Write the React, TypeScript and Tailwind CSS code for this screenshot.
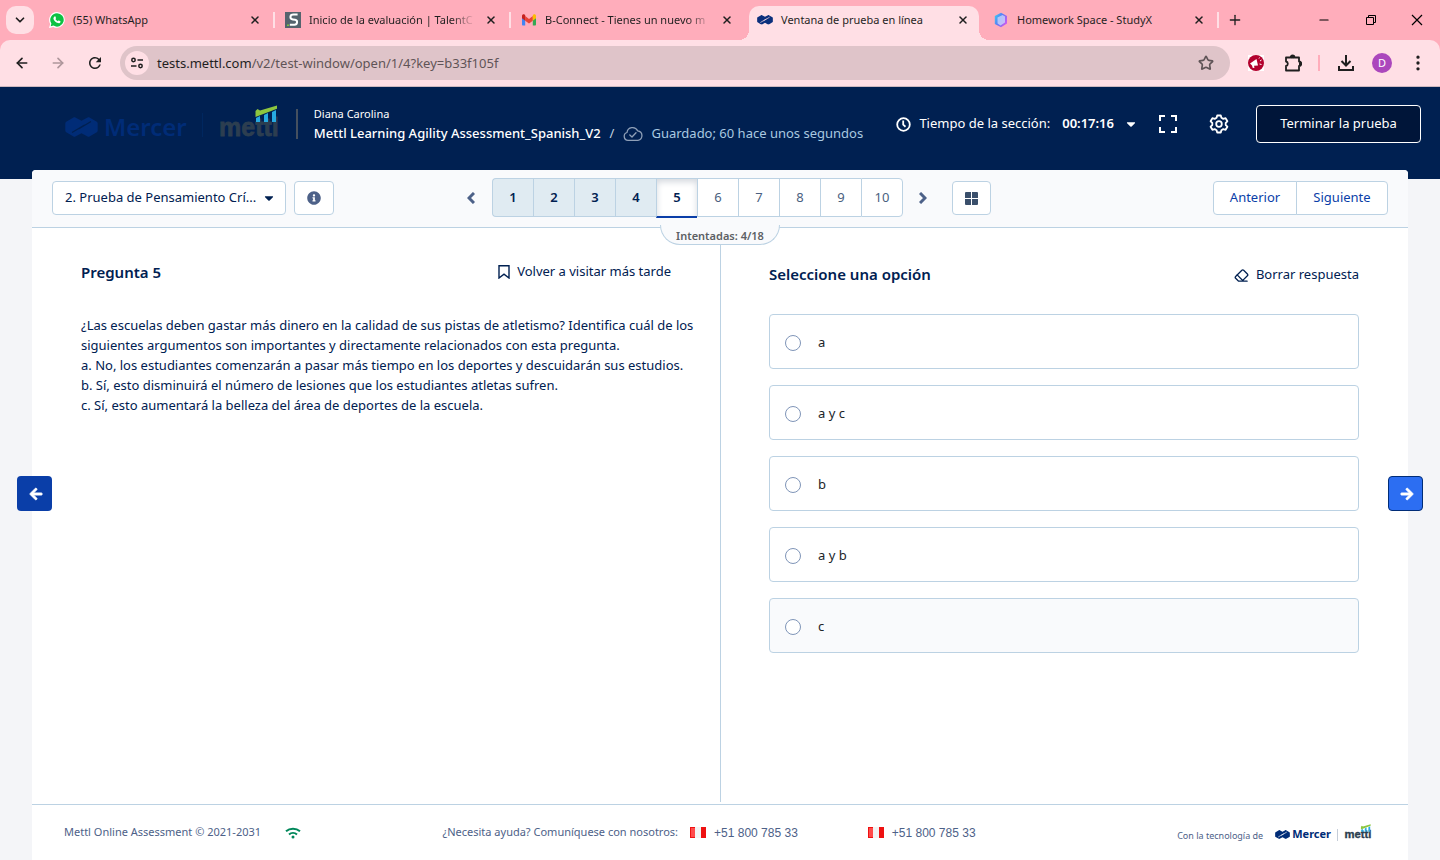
import { useState } from 'react';
import type { ReactNode } from 'react';
import { ArrowLeft, ArrowRight, ChevronDown, Eraser, EllipsisVertical, Minus, Plus, Star, X } from 'lucide-react';
import { FaArrowLeft, FaArrowRight, FaCaretDown, FaInfoCircle } from 'react-icons/fa';
import { MdRefresh } from 'react-icons/md';

const QUESTIONS = [1, 2, 3, 4, 5, 6, 7, 8, 9, 10];
const OPTIONS = ['a', 'a y c', 'b', 'a y b', 'c'];

function WhatsAppIcon() {
  return (
    <svg width="16" height="16" viewBox="0 0 16 16">
      <path d="M8 0A7.900 7.900 0 0 0 1.200 11.900L0 16l4.200-1.100A7.900 7.900 0 1 0 8 0z" fill="#fff" />
      <path d="M8 1.200a6.700 6.700 0 0 0-5.600 10.400l-.7 2.700 2.800-.7A6.700 6.700 0 1 0 8 1.200z" fill="#0dc143" />
      <path d="M5.600 4.400c.3-.2.7-.1.8.2l.6 1.300c.1.2 0 .5-.1.6l-.5.6c.5 1 1.300 1.700 2.400 2.200l.6-.7c.2-.2.4-.2.6-.1l1.300.7c.3.1.3.4.2.7-.3 1.100-1.500 1.500-2.500 1.200-2.200-.6-4-2.300-4.500-4.100-.2-1 .3-2.100 1.100-2.600z" fill="#fff" />
    </svg>
  );
}

function TalentIcon() {
  return (
    <svg width="16" height="16" viewBox="0 0 16 16">
      <rect width="16" height="16" fill="#55636d" />
      <path d="M12.600 2.500H8.500c-4 0-4 4.500-.6 5l2.200.3c3 .5 2.400 5-.6 5H4.800" fill="none" stroke="#fff" strokeWidth="2" />
      <rect x="2" y="12.500" width="2" height="1.500" fill="#7fc241" />
    </svg>
  );
}

function GmailIcon() {
  return (
    <svg width="16" height="16" viewBox="0 0 16 16">
      <path d="M1 4v8.500c0 .5.400 1 1 1h2.200V6.300z" fill="#4285f4" />
      <path d="M15 4v8.500c0 .5-.4 1-1 1h-2.200V6.300z" fill="#34a853" />
      <path d="M4.200 8.700V4.100L8 7l3.800-2.900v4.600L8 11.500z" fill="#ea4335" />
      <path d="M1 4c0-1.600 1.700-2 2.700-1.300l.5.400v5.600L1 6.300z" fill="#c5221f" />
      <path d="M15 4c0-1.600-1.700-2-2.700-1.300l-.5.400v5.600L15 6.300z" fill="#fbbc04" />
    </svg>
  );
}

// Two joined hexagons with a diagonal slit in each
function MercerMark({ width, className }: { width: number; className?: string }) {
  return (
    <svg width={width} viewBox="0 0 33 20" className={className}>
      <mask id="slits">
        <rect width="33" height="20" fill="#fff" />
        <path d="M7 15.500 19.500 8M13.500 12 26 4.500" stroke="#000" strokeWidth="1.400" fill="none" />
      </mask>
      <path
        d="M8.500.5c.6-.4 1.300-.4 1.900 0L16.500 3.800 22.600.5c.6-.4 1.300-.4 1.900 0l7.300 4.300c.6.400.9.9.9 1.600v7.200c0 .7-.3 1.200-.9 1.600l-7.300 4.300c-.6.400-1.300.4-1.900 0L16.500 16.200l-6.100 3.300c-.6.400-1.300.4-1.900 0L1.200 15.200c-.6-.4-.9-.9-.9-1.600V6.400c0-.7.3-1.200.9-1.600z"
        fill="currentColor"
        mask="url(#slits)"
      />
    </svg>
  );
}

function StudyIcon() {
  return (
    <svg width="16" height="16" viewBox="0 0 16 16">
      <defs>
        <linearGradient id="study" x1="0" y1="0" x2="1" y2="0.600">
          <stop offset="0" stopColor="#35d9f2" />
          <stop offset="0.500" stopColor="#5b7cf5" />
          <stop offset="1" stopColor="#c85bf0" />
        </linearGradient>
      </defs>
      <path d="M8 .8 14 4v7.500L8 15.200 1.800 12V4z" fill="url(#study)" />
      <path d="M4.500 5.500 9.500 3l2.500 1.500v6L7.500 13.500 4.500 11.500z" fill="#d5e3fd" opacity="0.700" />
    </svg>
  );
}

// "mettl" wordmark with the bar chart over the last letters
function MettlLogo({ width, color }: { width: number; color: string }) {
  return (
    <svg width={width} viewBox="0 0 62 38" className="shrink-0">
      <text x="1" y="31" fontFamily="Liberation Sans, sans-serif" fontWeight="700" fontSize="25" fill={color} stroke={color} strokeWidth="0.800">mettl</text>
      <path d="M38 13v4h4v-6zM46 10v7h4V8zM54 7v10h4V5z" fill="#27aae1" />
      <path d="M37.500 6 39.500 4 42 5.500 59 .5v3.300L37.500 12z" fill="#8dc63f" />
    </svg>
  );
}

type TabProps = { icon: ReactNode; title: string; active?: boolean; divider?: boolean; fade?: boolean };

function BrowserTab({ icon, title, active, divider, fade }: TabProps) {
  return (
    <div className="relative flex h-[34px] w-[236px] shrink-0 items-center pr-[6px]">
      <div className={active
        ? 'relative flex h-full min-w-0 flex-1 items-center gap-2 rounded-t-[10px] bg-[#ffdfe5] px-2 pb-[6px]'
        : 'flex h-full min-w-0 flex-1 items-center gap-2 px-2 pb-[6px]'}
      >
        {active && (
          <>
            <span className="absolute -left-[10px] bottom-0 size-[10px] bg-[radial-gradient(circle_at_0_0,transparent_10px,#ffdfe5_10px)]" />
            <span className="absolute -right-[10px] bottom-0 size-[10px] bg-[radial-gradient(circle_at_100%_0,transparent_10px,#ffdfe5_10px)]" />
          </>
        )}
        <span className="flex w-4 shrink-0 justify-center">{icon}</span>
        <span className={fade
          ? 'min-w-0 flex-1 whitespace-nowrap text-[11px] [mask-image:linear-gradient(to_right,black_86%,transparent)]'
          : 'min-w-0 flex-1 whitespace-nowrap text-[11px]'}
        >
          {title}
        </span>
        <button aria-label="Cerrar" className="flex w-4 justify-center"><X size={12} strokeWidth={3} /></button>
      </div>
      {divider && <span className="absolute right-[2px] top-[6px] h-4 w-[2px] bg-[#ffdfe5]" />}
    </div>
  );
}

function BrowserChrome() {
  return (
    <div className="border-b border-[#cdb8bf] bg-[#ffadbb] text-[#1f1f1f]">
      <div className="flex h-10 items-end">
        <div className="flex h-[34px] w-[41px] shrink-0 items-start pl-[6px]">
          <button aria-label="Buscar pestañas" className="flex size-7 items-center justify-center rounded-[10px] bg-[#ffdfe5]">
            <ChevronDown size={14} strokeWidth={3} />
          </button>
        </div>
        <BrowserTab icon={<WhatsAppIcon />} title="(55) WhatsApp" divider />
        <BrowserTab icon={<TalentIcon />} title="Inicio de la evaluación | TalentC" divider fade />
        <BrowserTab icon={<GmailIcon />} title="B-Connect - Tienes un nuevo m" fade />
        <BrowserTab icon={<MercerMark width={16} className="text-[#0a2f7c]" />} title="Ventana de prueba en línea" active />
        <BrowserTab icon={<StudyIcon />} title="Homework Space - StudyX" divider />
        <div className="flex h-[34px] flex-1 items-center justify-between pb-[6px] pl-[6px] pr-[17px]">
          <button aria-label="Nueva pestaña"><Plus size={16} strokeWidth={2} /></button>
          <div className="flex items-center gap-[34px] text-black">
            <button aria-label="Minimizar"><Minus size={14} strokeWidth={2} /></button>
            <button aria-label="Restaurar">
              <svg width="12" height="12" viewBox="0 0 12 12" fill="none" stroke="currentColor">
                <path d="M1.500 3.500h7v7h-7zM3.500 3.500v-2h7v7h-2" />
              </svg>
            </button>
            <button aria-label="Cerrar ventana">
              <svg width="12" height="12" viewBox="0 0 12 12" stroke="currentColor" strokeWidth="1.200"><path d="M1 1l10 10M11 1 1 11" /></svg>
            </button>
          </div>
        </div>
      </div>

      <div className="flex h-[46px] items-center rounded-t-[10px] bg-[#ffdfe5] pl-[14px] pr-3">
        <div className="flex w-[106px] shrink-0 items-center gap-5">
          <button aria-label="Atrás"><ArrowLeft size={16} strokeWidth={2.5} /></button>
          <button aria-label="Adelante" className="text-[#ae969b]"><ArrowRight size={16} strokeWidth={2.5} /></button>
          <button aria-label="Recargar"><MdRefresh size={18} /></button>
        </div>
        <div className="flex h-[34px] flex-1 items-center rounded-full bg-[#dfc4c9] pl-[5px] pr-4">
          <button aria-label="Información del sitio" className="mr-2 flex size-6 shrink-0 items-center justify-center rounded-full bg-[#ffdfe5]">
            <svg width="14" height="14" viewBox="0 0 14 14" fill="none" stroke="#1f1f1f" strokeWidth="1.500">
              <circle cx="3.500" cy="4" r="1.700" />
              <path d="M7.500 4H13M1 10h5.500" />
              <circle cx="10.500" cy="10" r="1.700" />
            </svg>
          </button>
          <p className="flex-1 pt-[2px] text-[13px] text-[#5f5457]"><span className="text-[#1f1f1f]">tests.mettl.com</span>/v2/test-window/open/1/4?key=b33f105f</p>
          <button aria-label="Agregar a favoritos" className="text-[#5f5457]"><Star size={16} strokeWidth={2.5} /></button>
        </div>
        <div className="ml-[18px] flex shrink-0 items-center">
          <button aria-label="Extensión" className="bg-white">
            <svg width="16" height="16" viewBox="0 0 16 16">
              <circle cx="8" cy="8" r="8" fill="#b3002d" />
              <path d="M2 8.500 8.500 4l1.500 6.500-4 .3.500 2-1.700.2-.8-2.500z" fill="#fff" />
              <path d="M11 3.500l.5-1M12 6l1.500-1M11.500 9l2 .5" stroke="#fff" />
            </svg>
          </button>
          <button aria-label="Extensiones" className="ml-5">
            <svg width="18" height="18" viewBox="0 0 18 18" fill="none" stroke="currentColor" strokeWidth="1.800">
              <path d="M2 3.500h4.500a2 2 0 0 1 4 0H15v4a2 2 0 0 1 0 4.500v4.500H2v-4.500a2.300 2.300 0 0 0 0-4.500z" strokeLinejoin="round" />
              <path d="M7 2.500h3v1.500H7zM15.500 8.500h1.500v2.500h-1.500z" fill="currentColor" strokeWidth="1" />
            </svg>
          </button>
          <span className="ml-4 h-4 w-[2px] bg-[#ffadbb]" />
          <button aria-label="Descargas" className="ml-[17px]">
            <svg width="18" height="18" viewBox="0 0 18 18" fill="none" stroke="currentColor" strokeWidth="2">
              <path d="M9 1v10M4.500 7 9 11.500 13.500 7M2 12v4h14v-4" />
            </svg>
          </button>
          <button aria-label="Perfil" className="ml-[17px] flex size-5 items-center justify-center rounded-full bg-[#ab47bc] text-[11px] text-white">D</button>
          <button aria-label="Menú" className="ml-4"><EllipsisVertical size={20} strokeWidth={2} /></button>
        </div>
      </div>
    </div>
  );
}

function ExamHeader() {
  return (
    <header className="flex h-[92px] items-start bg-[#002051] pl-[65px] pr-[19px] text-[13px] text-white">
      <div className="mt-[18px] flex shrink-0 items-start">
        <MercerMark width={33} className="mr-[6px] mt-3 text-[#002c77]" />
        <span className="mt-[9px] text-[24px]/[26px] font-semibold text-[#002c77]">Mercer</span>
        <span className="mx-[15px] mt-2 h-6 w-px bg-[#00275f]" />
        <MettlLogo width={62} color="#2c3e50" />
      </div>
      <span className="ml-4 mt-[22px] h-[30px] w-[2px] shrink-0 bg-[#45505f]" />
      <div className="ml-4 mt-[18px] whitespace-nowrap">
        <p className="text-[11px]/[18px]">Diana Carolina</p>
        <p className="flex h-[22px] items-center text-[13px]">
          <span className="font-medium">Mettl Learning Agility Assessment_Spanish_V2</span>
          <span className="mx-[9px] text-[#c3d3e0]">/</span>
          <svg width="20" height="16" viewBox="0 0 20 16" fill="none" stroke="#8fa0b8" strokeWidth="1.300" strokeLinecap="round" strokeLinejoin="round">
            <path d="M5 14.300a4 4 0 0 1-1-7.800A5.600 5.600 0 0 1 14.600 4.800a4.800 4.800 0 0 1 .4 9.500z" />
            <path d="M6.800 9l2.200 2 4-4.200" />
          </svg>
          <span className="ml-2 text-[#a9c9e0]">Guardado; 60 hace unos segundos</span>
        </p>
      </div>
      <div className="ml-auto mt-[18px] flex h-[38px] shrink-0 items-center whitespace-nowrap">
        <svg width="15" height="15" viewBox="0 0 15 15" fill="none" stroke="#fff" strokeWidth="1.800">
          <circle cx="7.500" cy="7.500" r="6.300" />
          <path d="M7.200 3.500v4.200l2.300 2" />
        </svg>
        <span className="ml-2">Tiempo de la sección:</span>
        <span className="ml-3 font-semibold">00:17:16</span>
        <button aria-label="Ver tiempo" className="ml-[10px]"><FaCaretDown size={14} /></button>
        <button aria-label="Pantalla completa" className="ml-[21px]">
          <svg width="18" height="18" viewBox="0 0 18 18" fill="none" stroke="#fff" strokeWidth="2">
            <path d="M1 6V1h5M12 1h5v5M17 12v5h-5M6 17H1v-5" />
          </svg>
        </button>
        <button aria-label="Configuración" className="ml-8">
          <svg width="20" height="20" viewBox="0 0 20 20" fill="none" stroke="#fff" strokeWidth="1.800" strokeLinejoin="round">
            <path d="M8.200 1.500h3.600l.6 2.300 1.900 1.100 2.300-.7 1.800 3.100-1.700 1.600v2.200l1.700 1.600-1.800 3.100-2.300-.7-1.900 1.100-.6 2.300H8.200l-.6-2.300-1.900-1.100-2.300.7-1.800-3.100 1.700-1.600V8.900L1.600 7.300l1.800-3.100 2.300.7 1.900-1.100z" />
            <circle cx="10" cy="10" r="2.800" />
          </svg>
        </button>
        <button className="ml-[27px] h-[38px] w-[165px] rounded border border-white bg-[#001539]">Terminar la prueba</button>
      </div>
    </header>
  );
}

function Pager({ current, onSelect }: { current: number; onSelect: (n: number) => void }) {
  const cell = (n: number) => {
    if (n === current) return 'bg-white font-semibold text-[#002051] shadow-[inset_0_3px_6px_#d5d9df] border-b-2 border-b-[#0a3ea8] h-10';
    if (n < 5) return 'bg-[#e0ebf2] font-semibold text-[#002051] h-[39px]';
    return 'bg-white text-[#4a5f80] h-[39px]';
  };
  return (
    <nav className="flex items-center text-[13px]">
      <button aria-label="Página anterior" className="flex w-[43px] justify-center text-[#4d6188]">
        <svg width="8" height="12" viewBox="0 0 8 12" fill="none" stroke="currentColor" strokeWidth="3"><path d="M7 1 2 6l5 5" /></svg>
      </button>
      <div className="flex h-[39px] items-start">
        {QUESTIONS.map(n => (
          <button
            key={n}
            onClick={() => onSelect(n)}
            className={`${cell(n)} w-[41px] border border-r-0 border-[#bcd2e3] first:rounded-l last:w-[42px] last:rounded-r last:border-r`}
          >
            {n}
          </button>
        ))}
      </div>
      <button aria-label="Página siguiente" className="flex w-[39px] justify-center text-[#4d6188]">
        <svg width="8" height="12" viewBox="0 0 8 12" fill="none" stroke="currentColor" strokeWidth="3"><path d="M1 1l5 5-5 5" /></svg>
      </button>
      <button aria-label="Ver todas" className="ml-[10px] flex h-[34px] w-[39px] items-center justify-center rounded border border-[#bcd2e3] bg-white pt-[2px]">
        <svg width="13" height="13" viewBox="0 0 13 13" fill="#3a4f6b">
          <path d="M0 1a1 1 0 0 1 1-1h5v6H0zM7 0h5a1 1 0 0 1 1 1v5H7zM0 7h6v6H1a1 1 0 0 1-1-1zM7 7h6v5a1 1 0 0 1-1 1H7z" />
        </svg>
      </button>
    </nav>
  );
}

function PeruFlag() {
  return (
    <svg width="16" height="11" viewBox="0 0 16 11">
      <rect width="16" height="11" fill="#f3f3f3" />
      <rect width="5" height="11" fill="#e11" />
      <rect x="11" width="5" height="11" fill="#e11" />
      <rect x="1" y="1" width="4" height="9" fill="#ff4a4a" />
    </svg>
  );
}

export default function App() {
  const [current, setCurrent] = useState(5);
  const [answer, setAnswer] = useState('');

  return (
    <div className="flex min-h-screen flex-col bg-[#f4f5f8] font-['Noto_Sans','Open_Sans',sans-serif] text-[#002051]">
      <BrowserChrome />
      <ExamHeader />

      <main className="relative -mt-[9px] mx-8 flex flex-1 flex-col rounded-t bg-white">
        {/* Section toolbar */}
        <div className="relative grid h-[58px] grid-cols-[1fr_auto_1fr] items-start rounded-t border-b border-[#bcd2e3] bg-[#f9fafc] px-5 pt-2 text-[13px]">
          <div className="mt-[3px] flex gap-2">
            <div className="relative w-[234px]">
              <select aria-label="Sección" className="h-[34px] w-full appearance-none rounded border border-[#bcd2e3] bg-white pl-3 text-[13px]">
                <option>2. Prueba de Pensamiento Crí...</option>
              </select>
              <FaCaretDown size={14} className="pointer-events-none absolute right-[10px] top-[10px]" />
            </div>
            <button aria-label="Información" className="flex h-[34px] w-10 items-center justify-center rounded border border-[#bcd2e3] bg-white text-[#4d6188]">
              <FaInfoCircle size={14} />
            </button>
          </div>
          <Pager current={current} onSelect={setCurrent} />
          <div className="mt-[3px] flex justify-end text-[#0a3ea8]">
            <button className="h-[34px] w-[84px] rounded-l border border-[#bcd2e3] bg-white">Anterior</button>
            <button className="-ml-px h-[34px] w-[92px] rounded-r border border-[#bcd2e3] bg-white">Siguiente</button>
          </div>
          <div className="absolute left-1/2 top-[55px] z-10 h-5 w-[120px] -translate-x-1/2 rounded-b-[20px] border border-t-0 border-[#bcd2e3] bg-[#f9fafc] text-center text-[11px]/[21px] font-semibold text-[#5c6064]">
            Intentadas: 4/18
          </div>
        </div>

        {/* Question and answers */}
        <div className="relative flex flex-1 pb-[2px]">
          <section className="w-1/2 pl-[49px] pr-4">
            <div className="flex items-center justify-between pr-[33px] pt-8">
              <h1 className="text-[15px]/[24px] font-semibold">Pregunta 5</h1>
              <button className="flex items-center gap-[7px] text-[13px]">
                <svg width="12" height="14" viewBox="0 0 12 14" fill="none" stroke="currentColor" strokeWidth="1.400">
                  <path d="M1 .8h10v12.200L6 9.200 1 13z" />
                </svg>
                Volver a visitar más tarde
              </button>
            </div>
            <div className="mt-[31px] text-[13px]/[20px]">
              <p>¿Las escuelas deben gastar más dinero en la calidad de sus pistas de atletismo? Identifica cuál de los siguientes argumentos son importantes y directamente relacionados con esta pregunta.</p>
              <p>a. No, los estudiantes comenzarán a pasar más tiempo en los deportes y descuidarán sus estudios.</p>
              <p>b. Sí, esto disminuirá el número de lesiones que los estudiantes atletas sufren.</p>
              <p>c. Sí, esto aumentará la belleza del área de deportes de la escuela.</p>
            </div>
          </section>

          <section className="w-1/2 border-l border-[#bcd2e3] pl-12 pr-[49px]">
            <div className="flex items-center justify-between pt-[34px]">
              <h2 className="text-[15px]/[24px] font-semibold">Seleccione una opción</h2>
              <button onClick={() => setAnswer('')} className="flex items-center gap-[7px] pt-[2px] text-[13px]">
                <Eraser size={15} strokeWidth={2} />Borrar respuesta
              </button>
            </div>
            <div className="mt-7 flex flex-col gap-4 text-[13px] text-[#212529]">
              {OPTIONS.map(o => (
                <label key={o} className="flex h-[55px] items-center rounded border border-[#bcd2e3] px-[15px] pt-[2px] last:bg-[#f9fafc]">
                  <input
                    type="radio"
                    name="answer"
                    checked={answer === o}
                    onChange={() => setAnswer(o)}
                    className="mr-[17px] size-4 appearance-none rounded-full border border-[#7f95b8] bg-white checked:border-4"
                  />
                  {o}
                </label>
              ))}
            </div>
          </section>

          <button aria-label="Pregunta anterior" className="absolute -left-[15px] top-[248px] flex size-[35px] items-center justify-center rounded bg-[#0a3ea8] pl-[3px] text-white">
            <FaArrowLeft size={14} stroke="currentColor" strokeWidth={30} />
          </button>
          <button aria-label="Pregunta siguiente" className="absolute -right-[15px] top-[248px] flex size-[35px] items-center justify-center rounded border border-[#002c77] bg-[#2c6ef2] pl-[3px] text-white">
            <FaArrowRight size={14} stroke="currentColor" strokeWidth={30} />
          </button>
        </div>

        <footer className="grid h-14 grid-cols-[1fr_auto_1fr] items-center border-t border-[#bcd2e3] pl-8 pr-9 text-[11px] text-[#4d6188]">
          <div className="flex items-center">
            <span>Mettl Online Assessment © 2021-2031</span>
            <svg width="16" height="12" viewBox="0 0 16 12" fill="none" stroke="#00875a" strokeWidth="2" className="ml-6">
              <path d="M1 4.300a10.500 10.500 0 0 1 14 0M4 7.500a6 6 0 0 1 8 0" />
              <circle cx="8" cy="10" r="1.500" fill="#00875a" stroke="none" />
            </svg>
          </div>
          <div className="flex items-center pr-[18px]">
            <span>¿Necesita ayuda? Comuníquese con nosotros:</span>
            <span className="ml-3"><PeruFlag /></span>
            <a href="tel:+5180078533" className="ml-2 font-['Liberation_Sans',sans-serif] text-[12px]">+51 800 785 33</a>
            <span className="ml-[70px]"><PeruFlag /></span>
            <a href="tel:+5180078533" className="ml-2 font-['Liberation_Sans',sans-serif] text-[12px]">+51 800 785 33</a>
          </div>
          <div className="flex items-center justify-end">
            <span className="pt-[6px] text-[9px]">Con la tecnología de</span>
            <MercerMark width={15} className="ml-3 mt-1 text-[#002c77]" />
            <span className="ml-[2px] pt-1 text-[11px] font-bold text-[#002c77]">Mercer</span>
            <span className="mx-[6px] mt-1 h-3 w-px bg-[#c5cdd8]" />
            <MettlLogo width={28} color="#2c3e50" />
          </div>
        </footer>
      </main>
    </div>
  );
}
